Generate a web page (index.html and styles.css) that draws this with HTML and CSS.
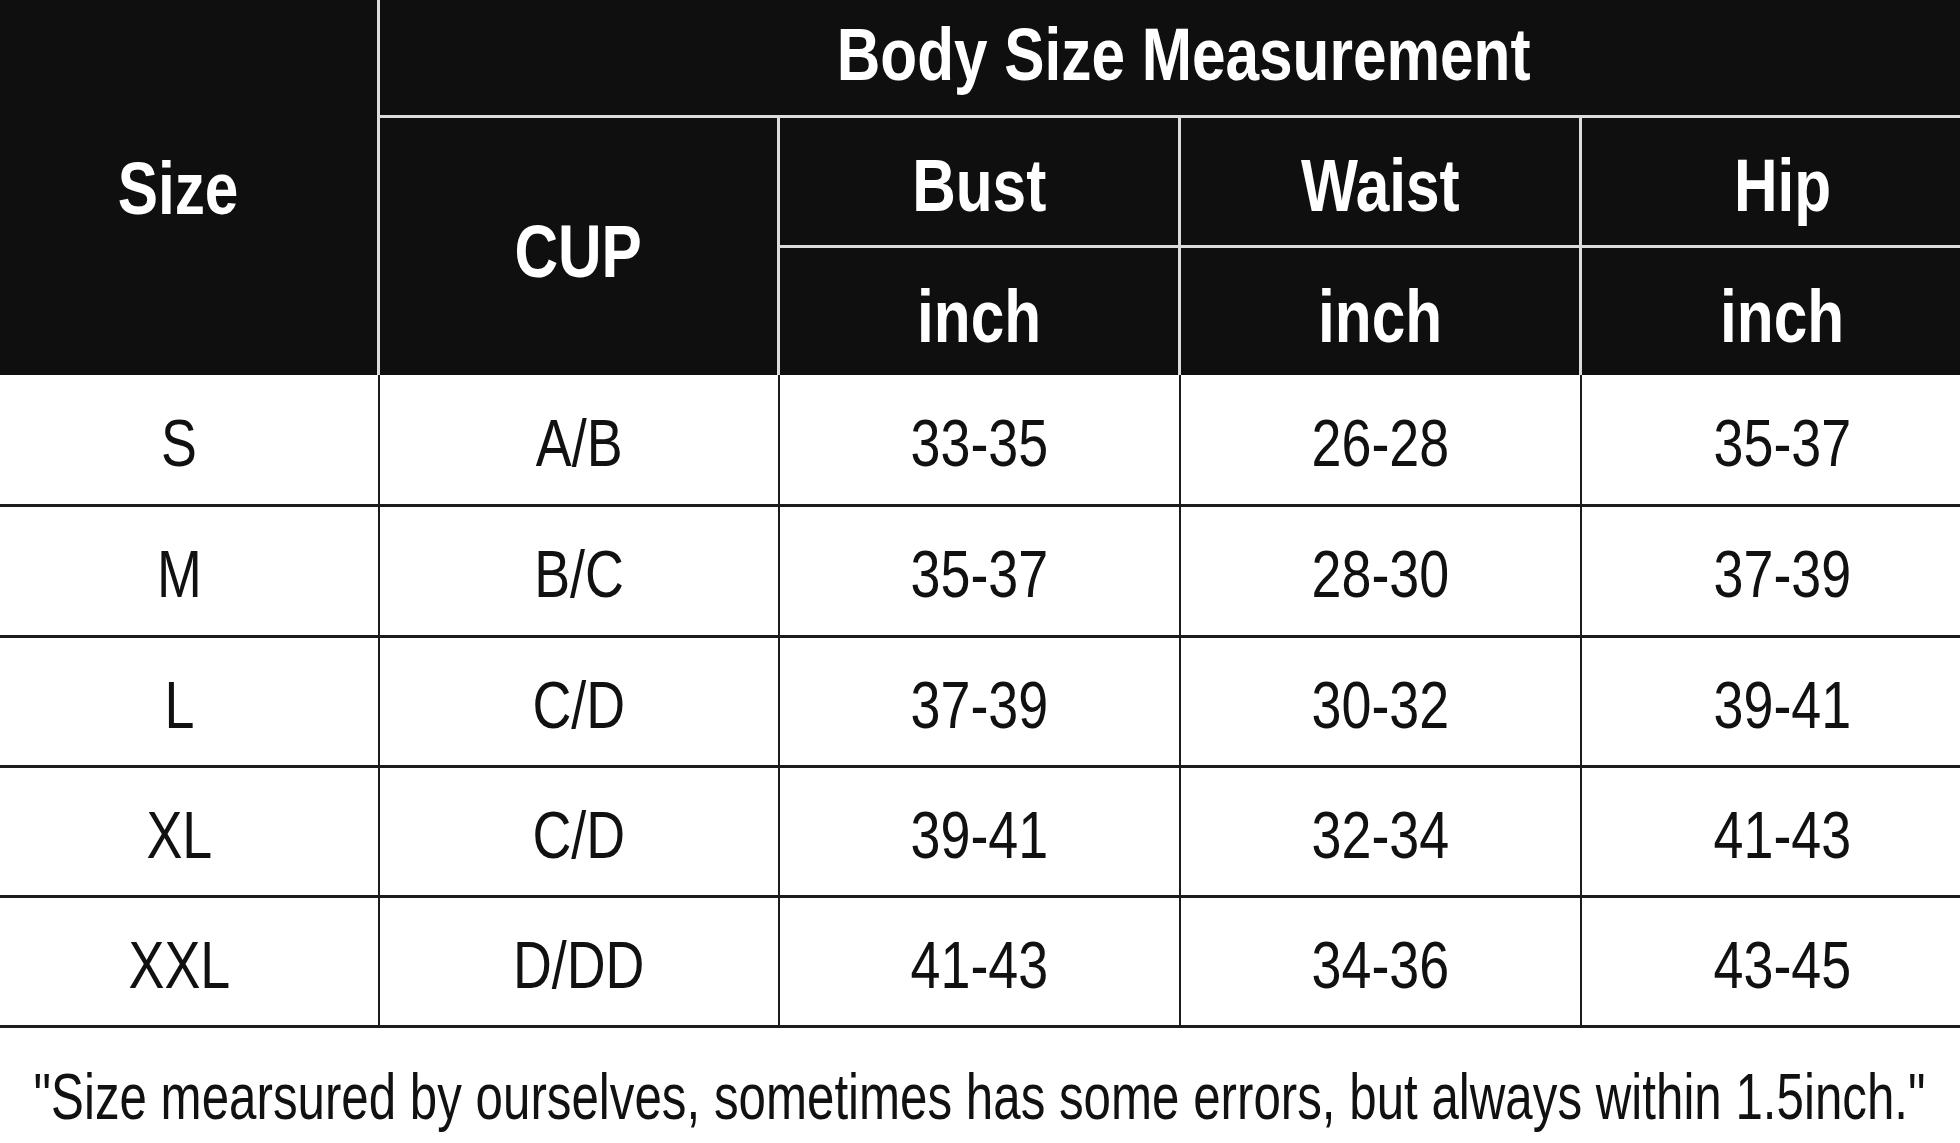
FILE: index.html
```html
<!DOCTYPE html>
<html lang="en">
<head>
<meta charset="utf-8">
<title>Body Size Measurement</title>
<link rel="stylesheet" href="styles.css">
</head>
<body>
<div class="chart">
  <div class="grid">
    <div class="cell head c-size"><span class="t">Size</span></div>
    <div class="cell head c-title"><span class="t">Body Size Measurement</span></div>
    <div class="cell head c-cup"><span class="t">CUP</span></div>
    <div class="cell head c-sub vr hb"><span class="t">Bust</span></div>
    <div class="cell head c-sub vr hb"><span class="t">Waist</span></div>
    <div class="cell head c-sub hb"><span class="t">Hip</span></div>
    <div class="cell head c-unit vr"><span class="t">inch</span></div>
    <div class="cell head c-unit vr"><span class="t">inch</span></div>
    <div class="cell head c-unit"><span class="t">inch</span></div>

    <div class="cell body vr"><span class="t">S</span></div>
    <div class="cell body vr"><span class="t">A/B</span></div>
    <div class="cell body vr"><span class="t">33-35</span></div>
    <div class="cell body vr"><span class="t">26-28</span></div>
    <div class="cell body"><span class="t">35-37</span></div>

    <div class="cell body vr"><span class="t">M</span></div>
    <div class="cell body vr"><span class="t">B/C</span></div>
    <div class="cell body vr"><span class="t">35-37</span></div>
    <div class="cell body vr"><span class="t">28-30</span></div>
    <div class="cell body"><span class="t">37-39</span></div>

    <div class="cell body vr"><span class="t">L</span></div>
    <div class="cell body vr"><span class="t">C/D</span></div>
    <div class="cell body vr"><span class="t">37-39</span></div>
    <div class="cell body vr"><span class="t">30-32</span></div>
    <div class="cell body"><span class="t">39-41</span></div>

    <div class="cell body vr"><span class="t">XL</span></div>
    <div class="cell body vr"><span class="t">C/D</span></div>
    <div class="cell body vr"><span class="t">39-41</span></div>
    <div class="cell body vr"><span class="t">32-34</span></div>
    <div class="cell body"><span class="t">41-43</span></div>

    <div class="cell body vr"><span class="t">XXL</span></div>
    <div class="cell body vr"><span class="t">D/DD</span></div>
    <div class="cell body vr"><span class="t">41-43</span></div>
    <div class="cell body vr"><span class="t">34-36</span></div>
    <div class="cell body"><span class="t">43-45</span></div>
  </div>
  <div class="note"><span class="t nt">"Size mearsured by ourselves, sometimes has some errors, but always within 1.5inch."</span></div>
</div>
</body>
</html>
```

FILE: styles.css
```css
* { box-sizing: border-box; }

html, body {
  margin: 0;
  padding: 0;
  background: #ffffff;
}

body {
  font-family: "Liberation Sans", Arial, sans-serif;
  color: #111111;
  width: 1960px;
  height: 1143px;
  overflow: hidden;
}

.chart {
  display: flex;
  flex-direction: column;
}

.grid {
  display: grid;
  grid-template-columns: 400px 400px 401px 401px 401px;
  grid-template-rows: 118px 130px 127px 132px 131px 130px 130px 130px;
  margin-left: -20px;
  width: 2003px;
}

.cell {
  display: flex;
  align-items: center;
  justify-content: center;
  overflow: hidden;
}

.t {
  display: inline-block;
  white-space: nowrap;
  transform: scaleX(0.815);
  transform-origin: center center;
}

.nt {
  transform: scaleX(0.77);
}

/* header */
.head {
  background: #0f0f0f;
  color: #ffffff;
  font-weight: 700;
  font-size: 74px;
  line-height: 1;
}

.c-size {
  grid-column: 1;
  grid-row: 1 / 4;
  border-right: 3px solid #dcdcdc;
  padding-top: 2px;
}

.c-title {
  grid-column: 2 / 6;
  grid-row: 1;
  border-bottom: 3px solid #dcdcdc;
  padding-bottom: 6px;
  padding-left: 4px;
}

.c-cup {
  grid-column: 2;
  grid-row: 2 / 4;
  border-right: 3px solid #dcdcdc;
  padding-top: 10px;
}

.c-sub {
  grid-row: 2;
  padding-top: 8px;
}

.c-unit {
  grid-row: 3;
  padding-top: 10px;
}

.head.vr { border-right: 3px solid #dcdcdc; }
.head.hb { border-bottom: 3px solid #dcdcdc; }

/* body rows */
.body {
  background: #ffffff;
  color: #111111;
  font-size: 66px;
  line-height: 1;
  border-bottom: 3px solid #1c1c1c;
  padding-top: 6px;
}

.body.vr { border-right: 2px solid #1c1c1c; }

/* footnote */
.note {
  height: 115px;
  display: flex;
  align-items: center;
  justify-content: center;
  padding-top: 22px;
  font-size: 64px;
  line-height: 1;
  color: #111111;
}
```
